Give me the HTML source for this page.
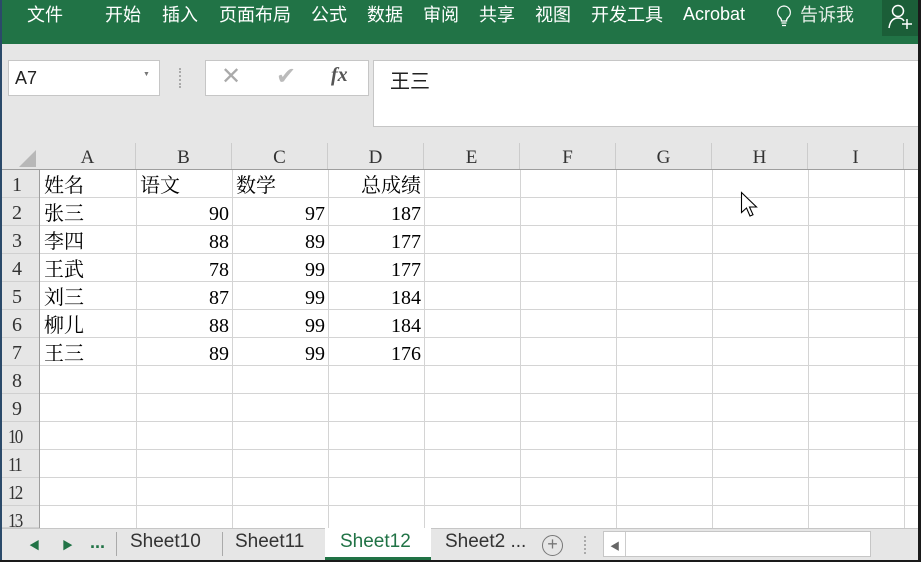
<!DOCTYPE html>
<html><head><meta charset="utf-8"><style>
*{margin:0;padding:0;box-sizing:border-box}
body{width:921px;height:562px;overflow:hidden;background:#fff;position:relative;font-family:"Liberation Sans","Noto Sans CJK SC",sans-serif}
.abs{position:absolute}
#rib{left:0;top:0;width:921px;height:44px;background:#217346;color:#fff;font-size:18px}
#rib span{position:absolute;top:3px;line-height:24px;height:24px}
#gray{left:0;top:44px;width:921px;height:100px;background:#e6e6e6}
.cell{position:absolute;font-family:"Liberation Serif","Noto Serif CJK SC",serif;font-size:20px;color:#000;line-height:28px;height:28px}
.ch{position:absolute;top:143px;height:27px;line-height:30px;text-align:center;font-family:"Liberation Serif",serif;font-size:19px;color:#333;background:#e6e6e6;border-right:1px solid #ccc}
.rh{position:absolute;left:2px;width:38px;height:28px;line-height:31px;font-family:"Liberation Serif",serif;font-size:20px;color:#333;background:#e6e6e6;padding-left:10px;border-bottom:1px solid #d0d0d0}
.rh.w{padding-left:6px}
.rh.w span{display:inline-block;letter-spacing:-2px;transform:scaleX(.85);transform-origin:left}
.vl{position:absolute;top:170px;width:1px;height:358px;background:#d4d4d4}
.hl{position:absolute;left:40px;width:880px;height:1px;background:#d4d4d4}
.r{text-align:right}
</style></head><body>
<div id="rib" class="abs">
<span style="left:27px">文件</span><span style="left:105px">开始</span><span style="left:162px">插入</span><span style="left:219px">页面布局</span><span style="left:311px">公式</span><span style="left:367px">数据</span><span style="left:423px">审阅</span><span style="left:479px">共享</span><span style="left:535px">视图</span><span style="left:591px">开发工具</span><span style="left:683px;top:2px">Acrobat</span>
<svg class="abs" style="left:775px;top:4px" width="18" height="24" viewBox="0 0 18 24"><path d="M9 2a6.5 6.5 0 0 0-4 11.5c1 1 1.5 2 1.5 3.5h5c0-1.5.5-2.5 1.5-3.5A6.5 6.5 0 0 0 9 2zM6.5 19h5M7 21.5h4" fill="none" stroke="#fff" stroke-width="1.3"/></svg>
<span style="left:800px;color:#e8f0ea">告诉我</span>
<div class="abs" style="left:882px;top:0;width:36px;height:36px;background:#1b5e38"></div>
<svg class="abs" style="left:887px;top:3px" width="28" height="28" viewBox="0 0 28 28"><circle cx="11" cy="8" r="5.5" fill="none" stroke="#fff" stroke-width="1.5"/><path d="M2 25c1-7 4-10 9-10 3 0 5 1 6 3M15 21h10M20 16v10" fill="none" stroke="#fff" stroke-width="1.5"/></svg>
</div>
<div class="abs" style="left:0;top:0;width:2px;height:562px;background:#2b4a6a;z-index:5"></div>
<div class="abs" style="left:918px;top:0;width:3px;height:562px;background:#1a1a1a;z-index:5"></div>
<div class="abs" style="left:0;top:560px;width:921px;height:2px;background:#1a1a1a;z-index:5"></div>
<div id="gray" class="abs"></div>
<div class="abs" style="left:8px;top:60px;width:152px;height:36px;background:#fff;border:1px solid #c6c6c6;font-size:18px;padding:7px 0 0 6px;color:#222">A7<span style="position:absolute;left:134px;top:10px;font-size:7px;color:#777">▼</span></div>
<div class="abs" style="left:179px;top:68px;width:3px;height:20px;border-left:2px dotted #aaa"></div>
<div class="abs" style="left:205px;top:60px;width:164px;height:36px;background:#fff;border:1px solid #c6c6c6"></div>
<span class="abs" style="left:221px;top:62px;font-size:24px;color:#aaa">✕</span>
<span class="abs" style="left:276px;top:62px;font-size:24px;color:#bbb">✔</span>
<span class="abs" style="left:331px;top:64px;font-size:20px;color:#555;font-family:'Liberation Serif',serif;font-style:italic;font-weight:bold">fx</span>
<div class="abs" style="left:373px;top:60px;width:548px;height:67px;background:#fff;border:1px solid #c6c6c6;border-right:none;font-size:20px;padding:4px 0 0 16px;color:#222">王三</div>
<div class="abs" style="left:2px;top:143px;width:38px;height:27px;background:#e6e6e6"></div>
<svg class="abs" style="left:16px;top:148px" width="22" height="20"><path d="M20 2V19H3z" fill="#b8b8b8"/></svg>
<div class="ch" style="left:40px;width:96px">A</div><div class="ch" style="left:136px;width:96px">B</div><div class="ch" style="left:232px;width:96px">C</div><div class="ch" style="left:328px;width:96px">D</div><div class="ch" style="left:424px;width:96px">E</div><div class="ch" style="left:520px;width:96px">F</div><div class="ch" style="left:616px;width:96px">G</div><div class="ch" style="left:712px;width:96px">H</div><div class="ch" style="left:808px;width:96px">I</div><div class="ch" style="left:904px;width:16px"></div>
<div class="abs" style="left:2px;top:169px;width:918px;height:1px;background:#9e9e9e"></div>
<div class="rh" style="top:170px">1</div><div class="rh" style="top:198px">2</div><div class="rh" style="top:226px">3</div><div class="rh" style="top:254px">4</div><div class="rh" style="top:282px">5</div><div class="rh" style="top:310px">6</div><div class="rh" style="top:338px">7</div><div class="rh" style="top:366px">8</div><div class="rh" style="top:394px">9</div><div class="rh w" style="top:422px"><span>10</span></div><div class="rh w" style="top:450px"><span>11</span></div><div class="rh w" style="top:478px"><span>12</span></div><div class="rh w" style="top:506px;height:22px;overflow:hidden"><span>13</span></div>
<div class="abs" style="left:39px;top:170px;width:1px;height:358px;background:#9e9e9e"></div>
<div class="vl" style="left:136px"></div><div class="vl" style="left:232px"></div><div class="vl" style="left:328px"></div><div class="vl" style="left:424px"></div><div class="vl" style="left:520px"></div><div class="vl" style="left:616px"></div><div class="vl" style="left:712px"></div><div class="vl" style="left:808px"></div><div class="vl" style="left:904px"></div>
<div class="hl" style="top:197px"></div><div class="hl" style="top:225px"></div><div class="hl" style="top:253px"></div><div class="hl" style="top:281px"></div><div class="hl" style="top:309px"></div><div class="hl" style="top:337px"></div><div class="hl" style="top:365px"></div><div class="hl" style="top:393px"></div><div class="hl" style="top:421px"></div><div class="hl" style="top:449px"></div><div class="hl" style="top:477px"></div><div class="hl" style="top:505px"></div>
<div id="cells">
<div class="cell" style="left:44px;top:172px">姓名</div><div class="cell" style="left:140px;top:172px">语文</div><div class="cell" style="left:236px;top:172px">数学</div><div class="cell r" style="left:328px;width:93px;top:172px">总成绩</div>
<div class="cell" style="left:44px;top:200px">张三</div><div class="cell r" style="left:136px;width:93px;top:200px">90</div><div class="cell r" style="left:232px;width:93px;top:200px">97</div><div class="cell r" style="left:328px;width:93px;top:200px">187</div>
<div class="cell" style="left:44px;top:228px">李四</div><div class="cell r" style="left:136px;width:93px;top:228px">88</div><div class="cell r" style="left:232px;width:93px;top:228px">89</div><div class="cell r" style="left:328px;width:93px;top:228px">177</div>
<div class="cell" style="left:44px;top:256px">王武</div><div class="cell r" style="left:136px;width:93px;top:256px">78</div><div class="cell r" style="left:232px;width:93px;top:256px">99</div><div class="cell r" style="left:328px;width:93px;top:256px">177</div>
<div class="cell" style="left:44px;top:284px">刘三</div><div class="cell r" style="left:136px;width:93px;top:284px">87</div><div class="cell r" style="left:232px;width:93px;top:284px">99</div><div class="cell r" style="left:328px;width:93px;top:284px">184</div>
<div class="cell" style="left:44px;top:312px">柳儿</div><div class="cell r" style="left:136px;width:93px;top:312px">88</div><div class="cell r" style="left:232px;width:93px;top:312px">99</div><div class="cell r" style="left:328px;width:93px;top:312px">184</div>
<div class="cell" style="left:44px;top:340px">王三</div><div class="cell r" style="left:136px;width:93px;top:340px">89</div><div class="cell r" style="left:232px;width:93px;top:340px">99</div><div class="cell r" style="left:328px;width:93px;top:340px">176</div>
</div>
<svg class="abs" style="left:740px;top:191px" width="20" height="28"><path d="M1.5 1.5v20l5-4.5 3.5 8 3-1.3-3.5-7.7h7z" fill="#fff" stroke="#000" stroke-width="1.1"/></svg>
<div class="abs" style="left:2px;top:528px;width:918px;height:32px;background:#e6e6e6;border-top:1px solid #c6c6c6"></div>
<span class="abs" style="left:29px;top:537px;font-size:11px;color:#217346">◀</span>
<span class="abs" style="left:62px;top:537px;font-size:11px;color:#217346">▶</span>
<span class="abs" style="left:90px;top:532px;font-size:18px;font-weight:bold;color:#217346">...</span>
<div class="abs" style="left:116px;top:532px;width:1px;height:24px;background:#aaa"></div>
<span class="abs" style="left:130px;top:531px;font-size:19px;color:#333">Sheet10</span>
<div class="abs" style="left:222px;top:532px;width:1px;height:24px;background:#aaa"></div>
<span class="abs" style="left:235px;top:531px;font-size:19px;color:#333">Sheet11</span>
<div class="abs" style="left:325px;top:528px;width:106px;height:32px;background:#fff;border-bottom:3px solid #217346"></div>
<span class="abs" style="left:340px;top:531px;font-size:19px;color:#217346">Sheet12</span>
<span class="abs" style="left:445px;top:531px;font-size:19px;color:#333">Sheet2 ...</span>
<div class="abs" style="left:542px;top:535px;width:21px;height:21px;border:1.5px solid #777;border-radius:50%;text-align:center;line-height:17px;font-size:18px;color:#777">+</div>
<div class="abs" style="left:584px;top:536px;width:2px;height:18px;border-left:2px dotted #aaa"></div>
<div class="abs" style="left:603px;top:531px;width:268px;height:26px;background:#fff;border:1px solid #c6c6c6"></div>
<div class="abs" style="left:625px;top:532px;width:1px;height:24px;background:#ccc"></div>
<span class="abs" style="left:610px;top:538px;font-size:10px;color:#666">◀</span>
</body></html>
